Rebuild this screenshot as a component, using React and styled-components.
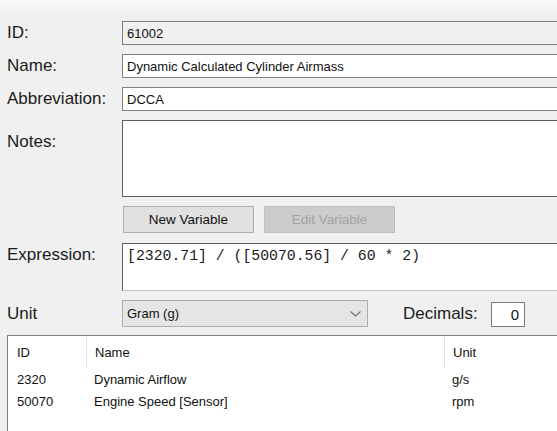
import React from "react";
import styled, { createGlobalStyle } from "styled-components";

const Global = createGlobalStyle`
  html, body { margin: 0; padding: 0; }
  body {
    width: 557px;
    height: 431px;
    overflow: hidden;
    background: linear-gradient(#f9f9f9 0px, #f0f0f0 18px, #f0f0f0 100%);
    font-family: "Liberation Sans", Arial, sans-serif;
    color: #1b1b1b;
  }
`;

const Page = styled.div`
  width: 680px;
  padding: 21px 0 0 7px;
  display: flex;
  flex-direction: column;
`;

const Row = styled.div`
  display: grid;
  grid-template-columns: 115px 1fr;
  align-items: ${(p) => (p.$top ? "start" : "center")};
  margin-top: ${(p) => p.$mt || 0}px;
  height: ${(p) => p.$h}px;
`;

const Label = styled.div`
  font-size: 17px;
  line-height: 20px;
  white-space: nowrap;
  padding-top: ${(p) => p.$pt || 0}px;
`;

const Field = styled.div`
  box-sizing: border-box;
  height: ${(p) => p.$h || 24}px;
  border: 1px solid ${(p) => p.$dark ? "#5e5e5e" : "#7f7f7f"};
  ${(p) => p.$soft && "border-bottom-color: #c4c4c4;"}
  background: ${(p) => (p.$readonly ? "#f0f0f0" : "#ffffff")};
  font-size: 13px;
  color: #111;
  padding: 0 4px;
  display: flex;
  align-items: ${(p) => (p.$multi ? "flex-start" : "center")};
  white-space: nowrap;
`;

const Mono = styled.div`
  font-family: "Liberation Mono", "DejaVu Sans Mono", monospace;
  font-size: 14.8px;
  line-height: 18px;
  padding-top: 3px;
  color: #1a1a1a;
`;

const Buttons = styled.div`
  grid-column: 2;
  display: flex;
  gap: 10px;
  padding-left: 1px;
`;

const Button = styled.div`
  box-sizing: border-box;
  width: 131px;
  height: 27px;
  display: flex;
  align-items: center;
  justify-content: center;
  font-size: 13.5px;
  border: 1px solid ${(p) => (p.$disabled ? "#bfbfbf" : "#adadad")};
  background: ${(p) => (p.$disabled ? "#cccccc" : "#e1e1e1")};
  color: ${(p) => (p.$disabled ? "#a3a3a3" : "#111")};
`;

const UnitLine = styled.div`
  display: flex;
  align-items: center;
`;

const Combo = styled.div`
  box-sizing: border-box;
  width: 246px;
  height: 27px;
  border: 1px solid #adadad;
  background: #e5e5e5;
  display: flex;
  align-items: center;
  justify-content: space-between;
  padding: 0 6px 0 4px;
  font-size: 13px;
  color: #111;
`;

const DecLabel = styled.div`
  font-size: 17px;
  margin-left: 35px;
  width: 88px;
`;

const DecInput = styled.div`
  box-sizing: border-box;
  width: 34px;
  height: 25px;
  margin-top: 2px;
  border: 1px solid #7a7a7a;
  background: #fff;
  font-size: 15px;
  display: flex;
  align-items: center;
  justify-content: flex-end;
  padding-right: 5px;
  color: #111;
`;

const List = styled.div`
  margin-top: 8px;
  box-sizing: border-box;
  height: 120px;
  border: 1px solid #828282;
  background: #fff;
  font-size: 13px;
  color: #111;
`;

const ListRow = styled.div`
  display: grid;
  grid-template-columns: 78px 358px 1fr;
  height: ${(p) => p.$h}px;
  align-items: center;
`;

const Cell = styled.div`
  box-sizing: border-box;
  height: 100%;
  display: flex;
  align-items: center;
  padding-left: ${(p) => (p.$first ? 9 : 8)}px;
  border-left: ${(p) => (p.$sep ? "1px solid #e5e5e5" : "none")};
  white-space: nowrap;
`;

const Chevron = () => (
  <svg width="11" height="6" viewBox="0 0 11 6">
    <polyline points="0.5,0.5 5.5,5 10.5,0.5" fill="none" stroke="#6f6f6f" strokeWidth="1.1" />
  </svg>
);

const variables = [
  { id: "2320", name: "Dynamic Airflow", unit: "g/s" },
  { id: "50070", name: "Engine Speed [Sensor]", unit: "rpm" },
];

export default function App() {
  return (
    <>
      <Global />
      <Page>
        <Row $h={24}>
          <Label>ID:</Label>
          <Field $readonly>61002</Field>
        </Row>
        <Row $h={24} $mt={9}>
          <Label>Name:</Label>
          <Field>Dynamic Calculated Cylinder Airmass</Field>
        </Row>
        <Row $h={24} $mt={9}>
          <Label>Abbreviation:</Label>
          <Field>DCCA</Field>
        </Row>
        <Row $h={77} $mt={9} $top>
          <Label $pt={12}>Notes:</Label>
          <Field $h={77} $dark $multi />
        </Row>
        <Row $h={27} $mt={9}>
          <Buttons>
            <Button>New Variable</Button>
            <Button $disabled>Edit Variable</Button>
          </Buttons>
        </Row>
        <Row $h={48} $mt={10} $top>
          <Label $pt={2}>Expression:</Label>
          <Field $h={48} $dark $soft $multi>
            <Mono>[2320.71] / ([50070.56] / 60 * 2)</Mono>
          </Field>
        </Row>
        <Row $h={27} $mt={9}>
          <Label>Unit</Label>
          <UnitLine>
            <Combo>
              <span>Gram (g)</span>
              <Chevron />
            </Combo>
            <DecLabel>Decimals:</DecLabel>
            <DecInput>0</DecInput>
          </UnitLine>
        </Row>
        <List>
          <ListRow $h={32}>
            <Cell $first>ID</Cell>
            <Cell $sep>Name</Cell>
            <Cell $sep>Unit</Cell>
          </ListRow>
          {variables.map((v) => (
            <ListRow key={v.id} $h={22}>
              <Cell $first>{v.id}</Cell>
              <Cell>{v.name}</Cell>
              <Cell>{v.unit}</Cell>
            </ListRow>
          ))}
        </List>
      </Page>
    </>
  );
}
